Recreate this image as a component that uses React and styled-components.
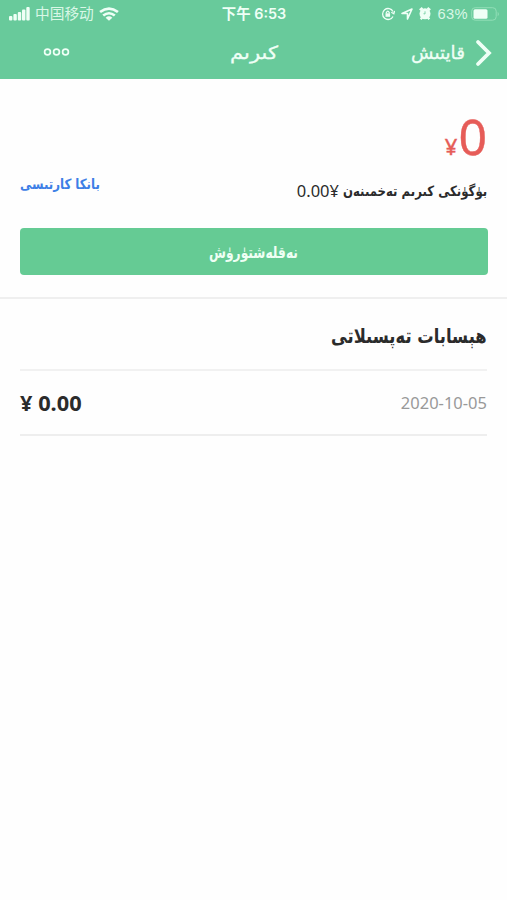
import React from "react";
import styled, { createGlobalStyle } from "styled-components";

const GlobalStyle = createGlobalStyle`
  * { box-sizing: border-box; }
  body {
    margin: 0;
    background: #fefefe;
    color: #2b2b2b;
    font-family: "Noto Sans", "DejaVu Sans", sans-serif;
  }
`;

const Screen = styled.main`
  width: 507px;
  height: 900px;
  overflow: hidden;
  background: #fefefe;
`;

const Header = styled.header`
  height: 79px;
  background: #68ca9b;
  color: #effff6;
`;

const StatusBar = styled.div`
  display: grid;
  grid-template-columns: 1fr auto 1fr;
  align-items: center;
  height: 27px;
  padding: 0 7px 0 8px;
  font-family: "Liberation Sans", "Noto Sans CJK SC", sans-serif;
  font-size: 14.7px;
  line-height: 27px;
`;

const StatusGroup = styled.div`
  display: flex;
  align-items: center;
  justify-content: ${(p) => (p.$end ? "flex-end" : "flex-start")};
  gap: ${(p) => p.$gap}px;
  height: 27px;
  white-space: nowrap;
`;

const StatusText = styled.span`
  padding-top: ${(p) => (p.$tight ? 1 : 2)}px;
  margin-right: ${(p) => (p.$tight ? -3 : 0)}px;
  color: #d9f7e6;
  letter-spacing: ${(p) => (p.$tight ? 0.4 : 0)}px;
`;

const Clock = styled.div`
  font-family: Inter, "Noto Sans CJK SC", sans-serif;
  font-size: 14.4px;
  font-weight: 600;
  white-space: nowrap;
`;

const NavBar = styled.nav`
  display: grid;
  grid-template-columns: 1fr auto 1fr;
  align-items: center;
  height: 52px;
  padding: 0 15px;
`;

const MoreButton = styled.button`
  display: flex;
  padding: 0 0 2px 28px;
  border: 0;
  background: none;
  color: inherit;
`;

const BackButton = styled(MoreButton)`
  justify-content: flex-end;
  align-items: center;
  gap: 10px;
  padding: 0;
`;

const Label = styled.span`
  display: block;
  width: ${(p) => p.$width}px;
  height: 30px;
  flex: none;
`;

const LabelText = styled.span`
  display: block;
  width: max-content;
  font-family: "DejaVu Sans", sans-serif;
  font-size: ${(p) => p.$size}px;
  font-weight: ${(p) => (p.$bold ? 700 : 400)};
  line-height: 30px;
  white-space: nowrap;
  transform-origin: 0 50%;
  -webkit-text-stroke: ${(p) => p.$stroke || 0}px currentColor;
`;

/* Condenses Uyghur text to the width its slot allows. */
function Uyghur({ width, size, bold, stroke, children }) {
  const ref = React.useRef(null);
  const [scale, setScale] = React.useState(1);
  React.useLayoutEffect(() => {
    setScale(width / ref.current.offsetWidth);
  }, [width, size, children]);
  return (
    <Label $width={width}>
      <LabelText
        ref={ref}
        dir="rtl"
        lang="ug"
        $size={size}
        $bold={bold}
        $stroke={stroke}
        style={{ transform: `scaleX(${scale})` }}
      >
        {children}
      </LabelText>
    </Label>
  );
}

const Summary = styled.section`
  height: 220px;
  padding: 31px 20px 0;
  border-bottom: 2px solid #efefef;
`;

const Balance = styled.div`
  display: flex;
  justify-content: flex-end;
  align-items: baseline;
  height: 52px;
  color: #e65c58;
  font-size: 50px;
  line-height: 52px;
  -webkit-text-stroke: 0.4px currentColor;
`;

const Currency = styled.span`
  margin-right: 1px;
  font-size: 22px;
`;

const SummaryRow = styled.div`
  display: flex;
  justify-content: space-between;
  align-items: flex-start;
  height: 66px;
  padding-top: 7px;
`;

const BankLink = styled.a`
  color: #3d7fe6;
`;

const Today = styled.div`
  display: flex;
  align-items: center;
  gap: 4px;
  height: 30px;
  margin-top: 7px;
`;

const TodayAmount = styled.span`
  font-size: 16.5px;
  line-height: 30px;
`;

const TransferButton = styled.button`
  display: flex;
  align-items: center;
  justify-content: center;
  width: 468px;
  height: 47px;
  padding: 2px 2px 0 0;
  border: 0;
  border-radius: 4px;
  background: #65cb94;
  color: #effff4;
`;

const Details = styled.section`
  padding: 0 20px;
`;

const DetailsTitle = styled.h2`
  display: flex;
  justify-content: flex-end;
  align-items: center;
  height: 72px;
  margin: 0;
  padding-top: 3px;
  border-bottom: 2px solid #f1f1f1;
`;

const Entry = styled.div`
  display: flex;
  justify-content: space-between;
  align-items: center;
  height: 65px;
  border-bottom: 2px solid #eeeeee;
`;

const Amount = styled.strong`
  font-size: 21.8px;
`;

const EntryDate = styled.time`
  color: #999;
  font-size: 16.5px;
`;

const SignalIcon = () => (
  <svg width="22" height="14" viewBox="0 0 22 14" fill="currentColor">
    <rect x="1" y="9" width="3.4" height="4.5" rx="1" />
    <rect x="5.4" y="7" width="3.4" height="6.5" rx="1" />
    <rect x="9.8" y="5" width="3.4" height="8.5" rx="1" />
    <rect x="14" y="2.5" width="3.4" height="11" rx="1" />
    <rect x="18.3" y="0" width="3.4" height="13.5" rx="1" />
  </svg>
);

const WifiIcon = () => (
  <svg width="20" height="14" viewBox="0 0 19 14" preserveAspectRatio="none" fill="none" stroke="currentColor" strokeWidth="2.6">
    <path d="M1 5Q9.500 -1.800 18 5" />
    <path d="M4 8.500Q9.500 4 15 8.500" />
    <path d="M6.300 10.700Q9.500 8 12.700 10.700L9.500 13.800Z" fill="currentColor" stroke="none" />
  </svg>
);

const LockIcon = () => (
  <svg width="14" height="14" viewBox="0 0 14 14" fill="none" stroke="currentColor" strokeWidth="1.3">
    <path d="M12 4.500A5.500 5.500 0 1 0 12 9.500M10.300 5.300L12.800 6.700L13.600 4" />
    <rect x="4.500" y="6.300" width="4.600" height="3.500" fill="currentColor" stroke="none" />
    <path d="M5.400 6.500V5.500Q6.800 2.800 8.200 5.500V6.500" />
  </svg>
);

const LocationIcon = () => (
  <svg width="12" height="12" viewBox="0 0 12 12" fill="none" stroke="currentColor" strokeWidth="1.6" strokeLinejoin="round">
    <path d="M1 5.500L11 1L6.500 11V5.500Z" />
  </svg>
);

const AlarmIcon = () => (
  <svg width="12" height="13" viewBox="0 0 12 13">
    <circle cx="6" cy="6.800" r="5.500" fill="currentColor" />
    <path d="M.8 3.200L3.500 .9M11.200 3.200L8.500 .9M1.700 12.300L3.500 10M10.300 12.300L8.500 10" stroke="currentColor" strokeWidth="2.200" />
    <path d="M6 4.300V7L4.500 6.700" fill="none" stroke="#68ca9b" strokeWidth=".8" />
  </svg>
);

const BatteryIcon = () => (
  <svg width="29" height="14" viewBox="0 0 29 14">
    <rect x=".7" y=".7" width="24.500" height="12.500" rx="3.500" fill="none" stroke="#92deb7" />
    <rect x="2.500" y="2.300" width="14" height="9.400" rx="1.500" fill="currentColor" />
    <path d="M26.700 4.700Q29 7 26.700 9.300Z" fill="#92deb7" />
  </svg>
);

const MoreIcon = () => (
  <svg width="27" height="10" viewBox="0 0 27 10" fill="none" stroke="currentColor" strokeWidth="1.7">
    <circle cx="4.500" cy="5" r="2.900" />
    <circle cx="13.500" cy="5" r="2.900" />
    <circle cx="22.500" cy="5" r="2.900" />
  </svg>
);

const ChevronIcon = () => (
  <svg width="17" height="28" viewBox="0 0 17 28" fill="none" stroke="currentColor" strokeWidth="3.800" strokeLinecap="round">
    <path d="M3 3L14 14L3 25" />
  </svg>
);

export default function App() {
  return (
    <Screen>
      <GlobalStyle />
      <Header>
        <StatusBar>
          <StatusGroup $gap={5}>
            <SignalIcon />
            <StatusText>中国移动</StatusText>
            <WifiIcon />
          </StatusGroup>
          <Clock>下午 6:53</Clock>
          <StatusGroup $end $gap={6}>
            <LockIcon />
            <LocationIcon />
            <AlarmIcon />
            <StatusText $tight>63%</StatusText>
            <BatteryIcon />
          </StatusGroup>
        </StatusBar>
        <NavBar>
          <MoreButton aria-label="More"><MoreIcon /></MoreButton>
          <Uyghur width={48} size={18} stroke={0.3}>كىرىم</Uyghur>
          <BackButton>
            <Uyghur width={54} size={18} stroke={0.3}>قايتىش</Uyghur>
            <ChevronIcon />
          </BackButton>
        </NavBar>
      </Header>
      <Summary>
        <Balance><Currency>¥</Currency>0</Balance>
        <SummaryRow>
          <BankLink><Uyghur width={80} size={14} bold>بانكا كارتىسى</Uyghur></BankLink>
          <Today>
            <TodayAmount>0.00¥</TodayAmount>
            <Uyghur width={144} size={14} bold>بۈگۈنكى كىرىم تەخمىنەن</Uyghur>
          </Today>
        </SummaryRow>
        <TransferButton><Uyghur width={89} size={16} bold>نەقلەشتۈرۈش</Uyghur></TransferButton>
      </Summary>
      <Details>
        <DetailsTitle><Uyghur width={156} size={20} bold>هېسابات تەپسىلاتى</Uyghur></DetailsTitle>
        <Entry>
          <Amount>¥ 0.00</Amount>
          <EntryDate>2020-10-05</EntryDate>
        </Entry>
      </Details>
    </Screen>
  );
}
